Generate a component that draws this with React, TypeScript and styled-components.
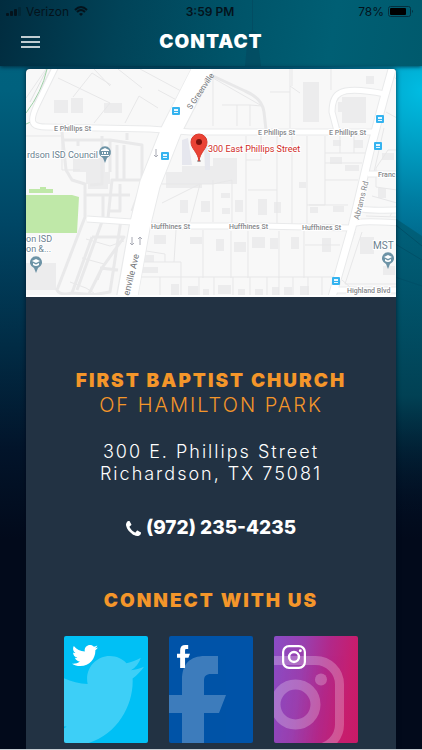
import React from 'react';
import styled, { createGlobalStyle } from 'styled-components';
import { FaTwitter } from 'react-icons/fa';

const GlobalStyle = createGlobalStyle`
  *, *::before, *::after { box-sizing: border-box; }
  body {
    margin: 0;
    background: #020a1b;
    font-family: Inter, "Liberation Sans", sans-serif;
  }
`;

const Page = styled.div`
  position: relative;
  min-height: 100vh;
  overflow: hidden;
  border-bottom: 1px solid #c9ced4;
  background:
    radial-gradient(ellipse 240px 240px at 100% 90px, #00bce2 0%, rgba(0, 160, 200, 0.6) 45%, rgba(0, 110, 140, 0) 100%),
    linear-gradient(180deg, #00647f 0%, #00617e 12%, #004665 30%, #012c45 46%, #02142a 60%, #020a1b 72%, #020a1b 100%);
`;

const Roof = styled.svg`
  position: absolute;
  right: 0;
  top: 216px;
  width: 30px;
  height: 300px;
`;

const TopBar = styled.header`
  position: relative;
  background: linear-gradient(100deg, #012c3f 0%, #014358 28%, #005469 55%, #005f74 78%, #005a6d 100%);
  box-shadow: 0 1px 4px rgba(0, 20, 35, 0.7);
`;

const Steeple = styled.svg`
  position: absolute;
  left: 58%;
  top: 0;
  width: 20px;
  height: 100%;
`;

const StatusBar = styled.div`
  position: relative;
  display: grid;
  grid-template-columns: 1fr auto 1fr;
  align-items: center;
  height: 22px;
  padding: 0 8px 0 6px;
  color: #04131c;
  font-size: 12px;
`;

const StatusGroup = styled.div<{ $end?: boolean }>`
  display: flex;
  align-items: center;
  justify-content: ${(p) => (p.$end ? 'flex-end' : 'flex-start')};
  gap: ${(p) => (p.$end ? 4 : 5)}px;
`;

const Clock = styled.span`
  font-weight: 600;
`;

const TitleRow = styled.div`
  position: relative;
  display: grid;
  grid-template-columns: 1fr auto 1fr;
  align-items: center;
  height: 44px;
  padding: 0 20px 4px;
`;

const MenuButton = styled.button`
  display: flex;
  justify-self: start;
  padding: 4px 1px;
  border: 0;
  background: none;
  color: #fff;
`;

const Title = styled.h1`
  margin: 0;
  color: #fff;
  font-size: 19px;
  font-weight: 900;
  line-height: 24px;
  letter-spacing: 1px;
`;

const Card = styled.main`
  position: relative;
  margin: 3px 26px 0;
  padding-bottom: 6px;
  border-radius: 4px 4px 0 0;
  overflow: hidden;
  background: #223243;
  color: #fff;
  text-align: center;
  box-shadow: 0 0 5px rgba(0, 10, 25, 0.7);
`;

const MapDrawing = styled.svg`
  display: block;
  width: 100%;
  height: auto;
  font-family: Roboto, sans-serif;
`;

const ChurchName = styled.h2`
  margin: 72px 0 0;
  color: #f4962a;
  font-size: 19px;
  font-weight: 900;
  line-height: 24px;
  letter-spacing: 2px;
`;

const NameLight = styled.span`
  display: block;
  font-size: 20px;
  font-weight: 300;
`;

const Address = styled.address`
  margin-top: 24px;
  font-size: 18px;
  font-style: normal;
  font-weight: 300;
  line-height: 22px;
  letter-spacing: 2px;
`;

const PhoneLink = styled.a`
  display: flex;
  align-items: center;
  justify-content: center;
  gap: 5px;
  margin-top: 31px;
  color: #fff;
  font-size: 19px;
  font-weight: 800;
  line-height: 24px;
  text-decoration: none;
`;

const ConnectTitle = styled.h2`
  margin: 49px 0 0;
  color: #f4962a;
  font-size: 19px;
  font-weight: 900;
  line-height: 24px;
  letter-spacing: 2px;
`;

const Tiles = styled.nav`
  display: flex;
  justify-content: center;
  gap: 21px;
  margin-top: 23px;
`;

const Tile = styled.a<{ $fill: string }>`
  position: relative;
  display: flex;
  align-items: flex-start;
  width: 84px;
  height: 107px;
  padding: 9px 8px;
  border-radius: 2px;
  overflow: hidden;
  background: ${(p) => p.$fill};
  color: #fff;
`;

const Watermark = styled.span<{ $left: number; $opacity: number }>`
  position: absolute;
  top: 20px;
  left: ${(p) => p.$left}px;
  display: flex;
  opacity: ${(p) => p.$opacity};
`;

const Bird = ({ size }: { size: number }) => <FaTwitter viewBox="0 48 512 512" size={size} />;

const FacebookF = ({ height }: { height: number }) => (
  <svg width={Math.round((height * 58) / 103)} height={height} viewBox="0 0 58 103" fill="currentColor">
    <path d="M14 103V57H0V39H14V24C14 8 22 0 37 0H50V18H43C38 18 36 20 36 25V39H58L51 57H36V103Z" />
  </svg>
);

const Camera = ({ size }: { size: number }) => (
  <svg width={size} height={size} viewBox="0 0 97 97" fill="none" stroke="currentColor">
    <rect x="4.5" y="4.5" width="88" height="88" rx="24" strokeWidth="9" />
    <circle cx="48.5" cy="48.5" r="20" strokeWidth="10" />
    <circle cx="74" cy="23.5" r="6" fill="currentColor" stroke="none" />
  </svg>
);

const roads = [
  'M56 66L37 105Q30 120 34 124Q37 127 46 127L150 129L190 132H376',
  'M385 94Q350 87 340 93Q332 97 332 112L337 131',
  'M87 219L132 222',
  'M150 226H260L350 228',
  'M368 174H400',
  'M357 208Q364 211 400 210',
  'M350 224L362 222Q370 221 400 223',
  'M337 290H400',
];

const lots =
  'M26 98L46 69M58 78L110 103L94 123M73 97L92 73L111 85M94 69L110 86M118 69L142 88M125 123L139 96L158 108M158 90L184 104M140 69L181 91' +
  'M26 136H62M62 136V170H80M213 78L262 106M213 78V126M222 105H250V126M237 105V126M290 69V128M270 92H290M250 105L262 106M331 69V90M292 69V86M290 86L300 93' +
  'M277 136V224M246 136V224M261 136V160H246M292 136V224M307 136V224M325 136V205H307M325 153H366M325 163H362M340 136V153M354 136V153M325 180H358M309 205H348' +
  'M213 180V222M200 184L190 222M162 184H213M232 180V224M248 190H277M162 203L200 184M146 232L140 250L165 254V262M176 230L174 262M140 262H181V277M203 230V278M231 231V278M248 231V278M279 231V278M304 231V278' +
  'M134 277H335M160 277V297M181 277V297M199 277V297M214 277V297M233 277V297M250 277V297M267 277V297M279 277V297M293 277V297M308 277V297M322 277V297M213 184L232 180M305 245H340M355 232L340 275M362 232L345 284H397M342 280L350 287M390 72L397 80M386 112L397 118M384 128L374 172M397 150H388L376 168V187L397 190M372 196L397 203M366 216L397 217M390 216L397 205M86 239L110 246L124 241M82 258L104 264L98 280M70 282L86 288L94 293';

const lanes =
  'M62 132L66 170L72 180L85 184V217L57 290Q60 296 72 293L92 237M62 140H110L142 145V180H112L108 218M78 140V146M102 136V184L90 185M110 140V172M127 133V140M117 145V180M124 145V180M86 195H130M103 195V218M120 184V211H108M103 219L77 290M121 220L110 292L86 296M92 237H124L102 268L88 296M140 190L132 211M100 268L118 270M72 293L98 295';

const blocks: [number, number, number, number][] = [
  [54, 100, 14, 13], [71, 98, 12, 15], [104, 103, 18, 10], [73, 158, 32, 14], [86, 172, 24, 12], [88, 180, 20, 9],
  [303, 82, 16, 40], [342, 97, 24, 26], [338, 102, 10, 10], [366, 76, 8, 8], [182, 166, 54, 18], [166, 172, 36, 16],
  [213, 158, 24, 26], [333, 140, 8, 6], [354, 140, 9, 8], [330, 157, 12, 7], [345, 165, 14, 6], [382, 153, 12, 7],
  [180, 200, 8, 13], [201, 201, 9, 11], [221, 193, 9, 5], [222, 208, 8, 6], [235, 200, 8, 12], [258, 199, 9, 16],
  [274, 202, 7, 11], [299, 182, 7, 6], [310, 207, 8, 6], [333, 206, 11, 6], [378, 188, 8, 10], [26, 263, 30, 27],
  [154, 235, 12, 9], [190, 237, 12, 7], [216, 239, 8, 12], [234, 242, 12, 10], [252, 237, 13, 11], [270, 238, 8, 11],
  [291, 237, 8, 12], [322, 238, 9, 14], [142, 255, 12, 7], [142, 267, 16, 6], [171, 284, 8, 11], [188, 286, 10, 9],
  [203, 289, 6, 7], [218, 285, 13, 9], [238, 289, 7, 7], [255, 289, 8, 7], [272, 287, 7, 8], [284, 287, 8, 8],
  [300, 286, 9, 9], [360, 237, 14, 17], [383, 266, 12, 9],
];

const stops = [[176, 111], [165, 156], [380, 119], [378, 146], [336, 281]];

const PlacePin = ({ x, y, school }: { x: number; y: number; school?: boolean }) => (
  <g transform={`translate(${x} ${y})`}>
    <path d="M0 11L-2 6A6 6 0 1 1 2 6Z" fill="#6d93a6" />
    {school ? (
      <path d="M-4 -1L0 -3L4 -1L0 1ZM-3 1V3Q0 5 3 3V1L0 2.5Z" fill="#fff" />
    ) : (
      <path d="M-4 -2L0 -4L4 -2V-1H-4ZM-3 0H-2V2H-3ZM-1 0H1V2H-1ZM2 0H3V2H2ZM-4 3H4V4H-4Z" fill="#fff" />
    )}
  </g>
);

const LocationMap = () => (
  <MapDrawing viewBox="26 69 370 228" role="img" aria-label="Map of 300 East Phillips Street">
    <rect x="26" y="69" width="371" height="228" fill="#f8f8f8" />
    <g fill="#ececed">
      {blocks.map(([x, y, w, h], i) => (
        <rect key={i} x={x} y={y} width={w} height={h} />
      ))}
      <path d="M182 140L188 138L192 165H182ZM204 146L210 144V170H205Z" fill="#e6e7ee" />
    </g>
    <path d={lots} fill="none" stroke="#e7e7e8" />
    <path d={lanes} fill="none" stroke="#e9e9ea" strokeWidth="3" strokeLinejoin="round" />
    <path d="M30 102L47 69M34 102L51 69" fill="none" stroke="#e1e2e3" />
    <path d="M26 113Q42 92 47 69M26 124L33 121" fill="none" stroke="#9fd2a8" />
    <path d="M213 76L245 91Q262 98 264 112L266 130" fill="none" stroke="#e8e8e9" strokeWidth="3" />
    <path d="M26 195H72L79 197L77 233H26ZM29 189H40V187H46V189H53V193H29Z" fill="#bfe8a8" />
    <g fill="none" stroke="#e9eaeb">
      <path d="M203 69L171 131L150 184L140 225L127 297" strokeWidth="22" />
      <path d="M393 66L384 98L370 151L352 227L332 297" strokeWidth="9" />
      {roads.map((d) => (
        <path key={d} d={d} strokeWidth="7" />
      ))}
    </g>
    <g fill="none" stroke="#fff">
      <path d="M204 66L171 131L150 184L140 225L127 299" strokeWidth="20" />
      <path d="M393 66L384 98L370 151L352 227L332 297" strokeWidth="7" />
      {roads.map((d) => (
        <path key={d} d={d} strokeWidth="5" />
      ))}
    </g>
    <path d="M26 296H397" stroke="#fff" strokeWidth="2" />
    <path
      d="M156 149V157M154 155L156 157L158 155M132 237V245M130 243L132 245L134 243M140 245V237M138 239L140 237L142 239"
      fill="none"
      stroke="#a9abb5"
    />
    <g fontSize="7" fontWeight="500" fill="#85878a" stroke="#fff" strokeWidth="2" paintOrder="stroke">
      <text x="54" y="131">E Phillips St</text>
      <text x="258" y="135">E Phillips St</text>
      <text x="329" y="135">E Phillips St</text>
      <text x="151" y="229">Huffhines St</text>
      <text x="229" y="229">Huffhines St</text>
      <text x="302" y="230">Huffhines St</text>
      <text x="378" y="177">Franc</text>
      <text x="347" y="293">Highland Blvd</text>
      <text transform="translate(359 220) rotate(-76)" fontSize="8" fontWeight="400">Abrams Rd</text>
    </g>
    <g fontSize="9" fill="#737578">
      <text transform="translate(191 110) rotate(-56)" fontSize="8">S Greenville</text>
      <text transform="translate(129 296) rotate(-76)">enville Ave</text>
    </g>
    <g fontSize="9" fill="#6a8190" stroke="#fff" strokeWidth="2" paintOrder="stroke">
      <text x="98" y="158" textAnchor="end">rdson ISD Council</text>
      <text x="26" y="242">on ISD</text>
      <text x="26" y="252">on &amp;...</text>
      <text x="373" y="249" fontSize="10">MST</text>
    </g>
    <PlacePin x={105} y={152} />
    <PlacePin x={36} y={262} school />
    <PlacePin x={388} y={258} school />
    {stops.map(([x, y]) => (
      <g key={`${x}-${y}`} transform={`translate(${x} ${y})`}>
        <rect x="-4" y="-4" width="8" height="8" rx="1" fill="#35b3ef" />
        <path d="M-2 -2H2V0H-2ZM-2 1H2V2H-2Z" fill="#e8f7ff" />
      </g>
    ))}
    <ellipse cx="199" cy="161" rx="2" ry="1" fill="#9d8f8f" />
    <path d="M199 161C198 152 191 149 191 142A8 8 0 1 1 207 142C207 149 200 152 199 161Z" fill="#ea4335" stroke="#d93a2f" strokeWidth="1" />
    <circle cx="199" cy="142" r="3" fill="#7b120c" />
    <text x="208" y="152" fontSize="9" fill="#cf2b26" stroke="#fff" strokeWidth="2" paintOrder="stroke">
      300 East Phillips Street
    </text>
  </MapDrawing>
);

export default function App() {
  return (
    <>
      <GlobalStyle />
      <Page>
        <Roof viewBox="0 0 30 300" preserveAspectRatio="none" aria-hidden="true">
          <defs>
            <linearGradient id="roof" x1="0" y1="0" x2="0" y2="1">
              <stop offset="0" stopColor="#00627c" />
              <stop offset="0.6" stopColor="#014154" />
              <stop offset="1" stopColor="#020f22" stopOpacity="0" />
            </linearGradient>
          </defs>
          <path d="M0 0L30 20V300H0Z" fill="url(#roof)" />
          <path d="M0 6L30 30M0 26L30 44M0 60L30 70" stroke="#005068" fill="none" />
        </Roof>
        <TopBar>
          <Steeple viewBox="0 0 20 66" preserveAspectRatio="none" aria-hidden="true">
            <path d="M7 0H8V30L12 33L16 66H0L3 33L7 30Z" fill="#034a60" opacity="0.7" />
          </Steeple>
          <StatusBar>
            <StatusGroup>
              <svg width="15" height="9" viewBox="0 0 15 9" fill="currentColor" aria-hidden="true">
                <rect x="0" y="6" width="3" height="3" rx="1" />
                <rect x="4" y="4" width="3" height="5" rx="1" />
                <rect x="8" y="2" width="3" height="7" rx="1" />
                <rect x="12" y="0" width="3" height="9" rx="1" opacity="0.3" />
              </svg>
              <span>Verizon</span>
              <svg width="14" height="10" viewBox="0 0 14 10" fill="none" stroke="currentColor" strokeWidth="2" aria-hidden="true">
                <path d="M1 4Q7 -2 13 4M3 6Q7 2 11 6" />
                <path d="M7 10L5 8Q7 6 9 8Z" fill="currentColor" stroke="none" />
              </svg>
            </StatusGroup>
            <Clock>3:59 PM</Clock>
            <StatusGroup $end>
              <span>78%</span>
              <svg width="26" height="11" viewBox="0 0 26 11" aria-hidden="true">
                <rect x="0.5" y="0.5" width="22" height="10" rx="2" fill="none" stroke="#04303f" />
                <rect x="2" y="2" width="16" height="7" rx="1" fill="#000" />
                <path d="M24 4Q26 5 24 7Z" fill="#04303f" />
              </svg>
            </StatusGroup>
          </StatusBar>
          <TitleRow>
            <MenuButton aria-label="Open menu">
              <svg width="19" height="12" viewBox="0 0 19 12" stroke="currentColor" strokeWidth="1.5" aria-hidden="true">
                <path d="M0 1H19M0 6H19M0 11H19" />
              </svg>
            </MenuButton>
            <Title>CONTACT</Title>
          </TitleRow>
        </TopBar>
        <Card>
          <LocationMap />
          <ChurchName>
            FIRST BAPTIST CHURCH
            <NameLight>OF HAMILTON PARK</NameLight>
          </ChurchName>
          <Address>
            300 E. Phillips Street
            <br />
            Richardson, TX 75081
          </Address>
          <PhoneLink href="tel:+19722354235">
            <svg width="15" height="15" viewBox="192 128 1408 1408" fill="currentColor" aria-hidden="true">
              <path d="M1600 1240q0 27-10 70.500t-21 68.500q-21 50-122 106-94 51-186 51-27 0-53-3.500t-57.500-12.500-47-14.500-55.500-20.500-49-18q-98-35-175-83-127-79-264-216t-216-264q-48-77-83-175-3-9-18-49t-20.500-55.500-14.500-47-12.500-57.500-3.500-53q0-92 51-186 56-101 106-122 25-11 68.500-21t70.500-10q14 0 21 3 18 6 53 76 11 19 30 54t35 63.500 31 53.500q3 4 17.500 25t21.500 35.500 7 28.500q0 20-28.500 50t-62 55-62 53-28.500 46q0 9 5 22.500t8.500 20.500 14 24 11.500 19q76 137 174 235t235 174q2 1 19 11.500t24 14 20.500 8.500 22.500 5q18 0 46-28.500t53-62 55-62 50-28.500q14 0 28.500 7t35.500 21.500 25 17.500q25 15 53.500 31t63.500 35 54 30q70 35 76 53 3 7 3 21z" />
            </svg>
            (972) 235-4235
          </PhoneLink>
          <ConnectTitle>CONNECT WITH US</ConnectTitle>
          <Tiles aria-label="Social media">
            <Tile href="#twitter" aria-label="Twitter" $fill="#00c0f5">
              <Watermark $left={-31} $opacity={0.24}>
                <Bird size={111} />
              </Watermark>
              <Bird size={26} />
            </Tile>
            <Tile href="#facebook" aria-label="Facebook" $fill="#0053a8">
              <Watermark $left={-1} $opacity={0.24}>
                <FacebookF height={103} />
              </Watermark>
              <FacebookF height={23} />
            </Tile>
            <Tile
              href="#instagram"
              aria-label="Instagram"
              $fill="linear-gradient(98deg, #8a4cc6 0%, #9a3fae 32%, #b22889 58%, #c71d6d 84%, #c91a66 100%)"
            >
              <Watermark $left={-27} $opacity={0.24}>
                <Camera size={97} />
              </Watermark>
              <Camera size={24} />
            </Tile>
          </Tiles>
        </Card>
      </Page>
    </>
  );
}
